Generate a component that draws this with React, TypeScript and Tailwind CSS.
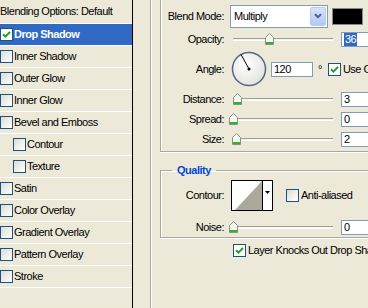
import clsx from 'clsx';

const effects = [
  { name: 'Drop Shadow', checked: true, selected: true },
  { name: 'Inner Shadow' },
  { name: 'Outer Glow' },
  { name: 'Inner Glow' },
  { name: 'Bevel and Emboss' },
  { name: 'Contour', indent: true },
  { name: 'Texture', indent: true },
  { name: 'Satin' },
  { name: 'Color Overlay' },
  { name: 'Gradient Overlay' },
  { name: 'Pattern Overlay' },
  { name: 'Stroke' },
];

function Check({ checked, white }: { checked?: boolean; white?: boolean }) {
  return (
    <span
      className={clsx(
        'flex h-[13px] w-[13px] shrink-0 items-center justify-center border border-[#1c5180]',
        white ? 'bg-white' : 'bg-linear-to-br from-[#dcdcd5] to-white',
      )}
    >
      {checked && (
        <svg width="9" height="9" viewBox="0 0 9 9">
          <path d="M1 4.2 L3.4 6.6 L8 2" stroke="#21a121" strokeWidth="2" fill="none" />
        </svg>
      )}
    </span>
  );
}

function Slider({ pos }: { pos: number }) {
  return (
    <div className="relative h-[15px] w-[108px] shrink-0 pt-[6px]">
      <div className="mx-[4px] h-[3px] border-t border-[#9d9d92] border-b border-b-white bg-[#f4f3ec]" />
      <svg className="absolute top-[1px]" style={{ left: pos }} width="9" height="12" viewBox="0 0 9 12">
        <path d="M0.5 4.5 L4.5 0.5 L8.5 4.5 V11.5 H0.5 Z" fill="#f6f6f2" stroke="#8d8d84" />
        <rect x="1" y="9" width="7" height="2" fill="#2fb22f" />
      </svg>
    </div>
  );
}

function NumBox({ children, w = 'w-[40px]' }: { children: React.ReactNode; w?: string }) {
  return (
    <div className={clsx('ml-[4px] flex h-[15px] shrink-0 items-center border border-[#7f9db9] bg-white pl-[2px]', w)}>
      {children}
    </div>
  );
}

function Label({ children }: { children: React.ReactNode }) {
  return <div className="w-[63px] shrink-0 text-right">{children}</div>;
}

function Dial() {
  return (
    <svg className="ml-[7px] shrink-0" width="36" height="36" viewBox="0 0 36 36">
      <defs>
        <radialGradient id="dialg" cx="0.4" cy="0.35" r="0.7">
          <stop offset="0" stopColor="#ffffff" />
          <stop offset="1" stopColor="#e2e2dc" />
        </radialGradient>
      </defs>
      <circle cx="18" cy="18" r="16.5" fill="url(#dialg)" stroke="#55658c" strokeWidth="1.5" />
      <line x1="18" y1="18" x2="10" y2="3.5" stroke="#000" strokeWidth="1" />
      <circle cx="18" cy="18" r="1.5" fill="#000" />
    </svg>
  );
}

function ContourPicker() {
  return (
    <svg className="ml-[7px] shrink-0" width="42" height="31" viewBox="0 0 42 31">
      <rect x="0.5" y="0.5" width="41" height="30" fill="#fff" stroke="#000" />
      <path d="M4 30 L31 1 V30 Z" fill="#aca89b" />
      <line x1="31.5" y1="1" x2="31.5" y2="30" stroke="#000" />
      <path d="M34 11 L39 11 L36.5 14 Z" fill="#000" />
    </svg>
  );
}

export default function App() {
  return (
    <div className="flex h-[308px] w-[368px] overflow-hidden bg-[#ece9d8] font-['Liberation_Sans',Arial,sans-serif] text-[11px] leading-[13px] tracking-[-0.5px] text-black">
      <div className="w-[133px] shrink-0 border-r border-black">
        <div className="flex h-[24px] items-center border-b border-white whitespace-nowrap">
          Blending Options: Default
        </div>
        {effects.map((e) => (
          <div
            key={e.name}
            className={clsx(
              'flex h-[22px] items-center gap-[1px] border-b border-white whitespace-nowrap',
              e.indent && 'pl-[13px]',
              e.selected && 'bg-[#316ac5] font-bold text-white',
            )}
          >
            <Check checked={e.checked} white={e.selected} />
            <span>{e.name}</span>
          </div>
        ))}
      </div>

      <div className="flex-1 overflow-hidden pl-[17px]">
        <div className="h-full w-[280px] border-l border-[#aca899] pl-[9px] shadow-[inset_1px_0_0_#fff]">
          <div className="flex w-[260px] flex-col border-b border-l border-[#aca899] pb-[4px] shadow-[inset_1px_0_0_#fff,0_1px_0_#fff]">
            <div className="flex h-[32px] items-center">
              <Label>Blend Mode:</Label>
              <div className="ml-[6px] flex h-[23px] w-[98px] shrink-0 items-center border border-[#7f9db9] bg-white">
                <span className="flex-1 pl-[3px] pt-[1px]">Multiply</span>
                <div className="m-[1px] flex h-[19px] w-[16px] items-center justify-center rounded-[2px] border border-[#b8c9f4] bg-linear-to-b from-[#d6e1fd] to-[#b4c8f6]">
                  <svg width="8" height="6" viewBox="0 0 8 6">
                    <path d="M1 1.2 L4 4.2 L7 1.2" stroke="#4d6185" strokeWidth="2" fill="none" />
                  </svg>
                </div>
              </div>
              <div className="ml-[4px] h-[17px] w-[31px] shrink-0 border border-[#888] bg-black" />
            </div>

            <div className="flex h-[15px] items-center">
              <Label>Opacity:</Label>
              <div className="ml-[5px]">
                <Slider pos={36} />
              </div>
              <NumBox>
                <span className="bg-[#316ac5] px-[1px] text-white">36</span>
              </NumBox>
            </div>

            <div className="mt-[4px] flex h-[36px] items-center">
              <Label>Angle:</Label>
              <Dial />
              <NumBox w="w-[42px]">120</NumBox>
              <span className="ml-[5px]">°</span>
              <div className="ml-[6px] flex items-center gap-[2px] whitespace-nowrap">
                <Check checked white />
                <span>Use Global Light</span>
              </div>
            </div>

            {[
              { label: 'Distance:', value: '3', pos: 4 },
              { label: 'Spread:', value: '0', pos: 0 },
              { label: 'Size:', value: '2', pos: 3 },
            ].map((r) => (
              <div key={r.label} className="mt-[5px] flex h-[15px] items-center">
                <Label>{r.label}</Label>
                <div className="ml-[5px]">
                  <Slider pos={r.pos} />
                </div>
                <NumBox>{r.value}</NumBox>
              </div>
            ))}
          </div>

          <fieldset className="mt-[12px] w-[260px] border border-[#aca899] pb-[2px] shadow-[inset_1px_1px_0_#fff,0_1px_0_#fff]">
            <legend className="ml-[11px] px-[5px] font-bold leading-[13px] text-[#0046d5]">Quality</legend>
            <div className="mt-[3px] flex h-[31px] items-center">
              <Label>Contour:</Label>
              <ContourPicker />
              <div className="ml-[13px] flex items-center gap-[2px]">
                <Check />
                <span>Anti-aliased</span>
              </div>
            </div>
            <div className="mt-[9px] flex h-[15px] items-center">
              <Label>Noise:</Label>
              <div className="ml-[5px]">
                <Slider pos={0} />
              </div>
              <NumBox>0</NumBox>
            </div>
          </fieldset>

          <div className="mt-[6px] flex items-center gap-[2px] whitespace-nowrap pl-[73px]">
            <Check checked white />
            <span>Layer Knocks Out Drop Shadow</span>
          </div>
        </div>
      </div>
    </div>
  );
}
